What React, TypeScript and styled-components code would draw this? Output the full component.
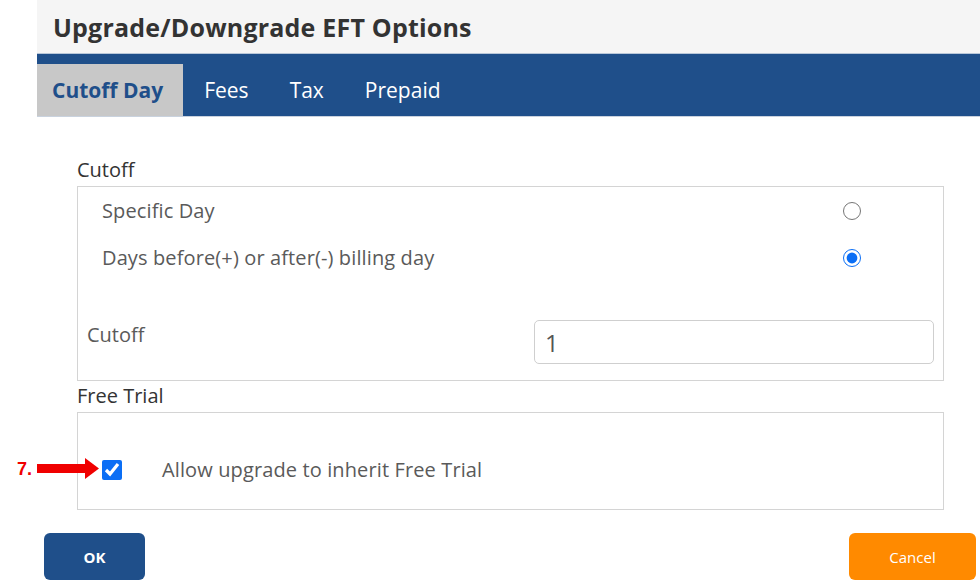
import React from "react";
import styled, { createGlobalStyle } from "styled-components";

const BLUE = "#1f4f8a";
const ORANGE = "#ff8a00";

const GlobalStyle = createGlobalStyle`
    html, body {
        margin: 0;
        padding: 0;
        background: #fff;
        font-family: "Open Sans", "Liberation Sans", sans-serif;
    }
    * { box-sizing: border-box; }
`;

type TabProps = { active?: boolean, first?: boolean };

const TABS = ["Cutoff Day", "Fees", "Tax", "Prepaid"];

export default function App() {
    return (
        <>
            <GlobalStyle />
            <Page>
                <Dialog>
                    <Header>
                        <Title>Upgrade/Downgrade EFT Options</Title>
                    </Header>
                    <TabBar>
                        {TABS.map((t, i) => (
                            <Tab key={t} active={i === 0} first={i === 0}>{t}</Tab>
                        ))}
                    </TabBar>

                    <Body>
                        <SectionLabel>Cutoff</SectionLabel>
                        <Box>
                            <RadioRow>
                                <OptionText>Specific Day</OptionText>
                                <Radio type="radio" name="cutoff" readOnly />
                            </RadioRow>
                            <RadioRow>
                                <OptionText>Days before(+) or after(-) billing day</OptionText>
                                <Radio type="radio" name="cutoff" defaultChecked />
                            </RadioRow>
                            <InputRow>
                                <FieldLabel>Cutoff</FieldLabel>
                                <TextInput defaultValue="1" />
                            </InputRow>
                        </Box>

                        <SectionLabel>Free Trial</SectionLabel>
                        <Box>
                            <CheckRow>
                                <Annotation>
                                    <AnnotationNumber>7.</AnnotationNumber>
                                    <svg width="62" height="24" viewBox="0 0 62 24">
                                        <rect x="0" y="7" width="50" height="9" fill="#f00000" />
                                        <polygon points="48,1 62,11.5 48,22" fill="#f00000" />
                                    </svg>
                                </Annotation>
                                <Check type="checkbox" defaultChecked />
                                <OptionText>Allow upgrade to inherit Free Trial</OptionText>
                            </CheckRow>
                        </Box>
                    </Body>

                    <Footer>
                        <Button color={BLUE} width={101} bold>OK</Button>
                        <Button color={ORANGE} width={127}>Cancel</Button>
                    </Footer>
                </Dialog>
            </Page>
        </>
    );
}

//style

const Page = styled.div`
    width: 980px;
    height: 586px;
    overflow: hidden;
    background: #fff;
`;

const Dialog = styled.div`
    margin-left: 37px;
    display: flex;
    flex-direction: column;
`;

const Header = styled.div`
    height: 54px;
    background-color: #f5f5f5;
    display: flex;
    align-items: center;
    padding-left: 16px;
    border-bottom: 1px solid #b9c7d9;
`;

const Title = styled.div`
    font-size: 25px;
    font-weight: 700;
    color: #333;
    letter-spacing: 0.2px;
`;

const TabBar = styled.div`
    height: 63px;
    background-color: ${BLUE};
    display: flex;
    align-items: flex-end;
    border-bottom: 1px solid #c9d2de;
`;

const Tab = styled.div<TabProps>`
    height: 52px;
    display: flex;
    align-items: center;
    padding: ${p => p.first ? "0 20px 0 15px" : "0 20px 0 21px"};
    background-color: ${p => p.active ? "#c8c8c8" : "transparent"};
    color: ${p => p.active ? BLUE : "#fff"};
    font-size: 21px;
    font-weight: ${p => p.active ? 700 : 400};
`;

const Body = styled.div`
    padding: 40px 36px 0 40px;
    display: flex;
    flex-direction: column;
`;

const SectionLabel = styled.div`
    font-size: 20px;
    line-height: 26px;
    color: #333;
    margin-bottom: 3px;
`;

const Box = styled.div`
    border: 1px solid #d4d4d4;
    margin-bottom: 2px;
    display: flex;
    flex-direction: column;
`;

const RadioRow = styled.div`
    height: 47px;
    display: flex;
    align-items: center;
    justify-content: space-between;
    padding: 0 82px 0 24px;
`;

const OptionText = styled.div`
    font-size: 20px;
    line-height: 26px;
    color: #5a5a5a;
    letter-spacing: 0.12px;
`;

const Radio = styled.input`
    width: 18px;
    height: 18px;
    margin: 0;
    accent-color: #0b6ef5;
`;

const InputRow = styled.div`
    display: flex;
    justify-content: space-between;
    align-items: flex-start;
    padding: 39px 9px 16px 9px;
`;

const FieldLabel = styled.div`
    font-size: 20px;
    line-height: 26px;
    color: #5a5a5a;
    padding-top: 2px;
`;

const TextInput = styled.input`
    width: 400px;
    height: 44px;
    border: 1px solid #cfcfcf;
    border-radius: 5px;
    padding: 0 10px;
    font-family: "Open Sans", "Liberation Sans", sans-serif;
    font-size: 24px;
    color: #555;
    outline: none;
`;

const CheckRow = styled.div`
    position: relative;
    height: 96px;
    display: flex;
    align-items: center;
    gap: 40px;
    padding: 18px 0 0 24px;
`;

const Check = styled.input`
    width: 20px;
    height: 20px;
    margin: 0;
    accent-color: #0b6ef5;
`;

const Annotation = styled.div`
    position: absolute;
    left: -61px;
    top: 44px;
    display: flex;
    align-items: center;
    gap: 5px;
`;

const AnnotationNumber = styled.span`
    color: #f00000;
    font-size: 18px;
    font-weight: 700;
    font-family: "Liberation Sans", Arial, sans-serif;
`;

const Footer = styled.div`
    display: flex;
    justify-content: space-between;
    padding: 21px 4px 0 7px;
`;

const Button = styled.button<{ color: string, width: number, bold?: boolean }>`
    width: ${p => p.width}px;
    height: 47px;
    border: none;
    border-radius: 6px;
    background-color: ${p => p.color};
    color: #fff;
    font-family: "Open Sans", "Liberation Sans", sans-serif;
    font-size: 15px;
    font-weight: ${p => p.bold ? 700 : 400};
    cursor: pointer;
`;
